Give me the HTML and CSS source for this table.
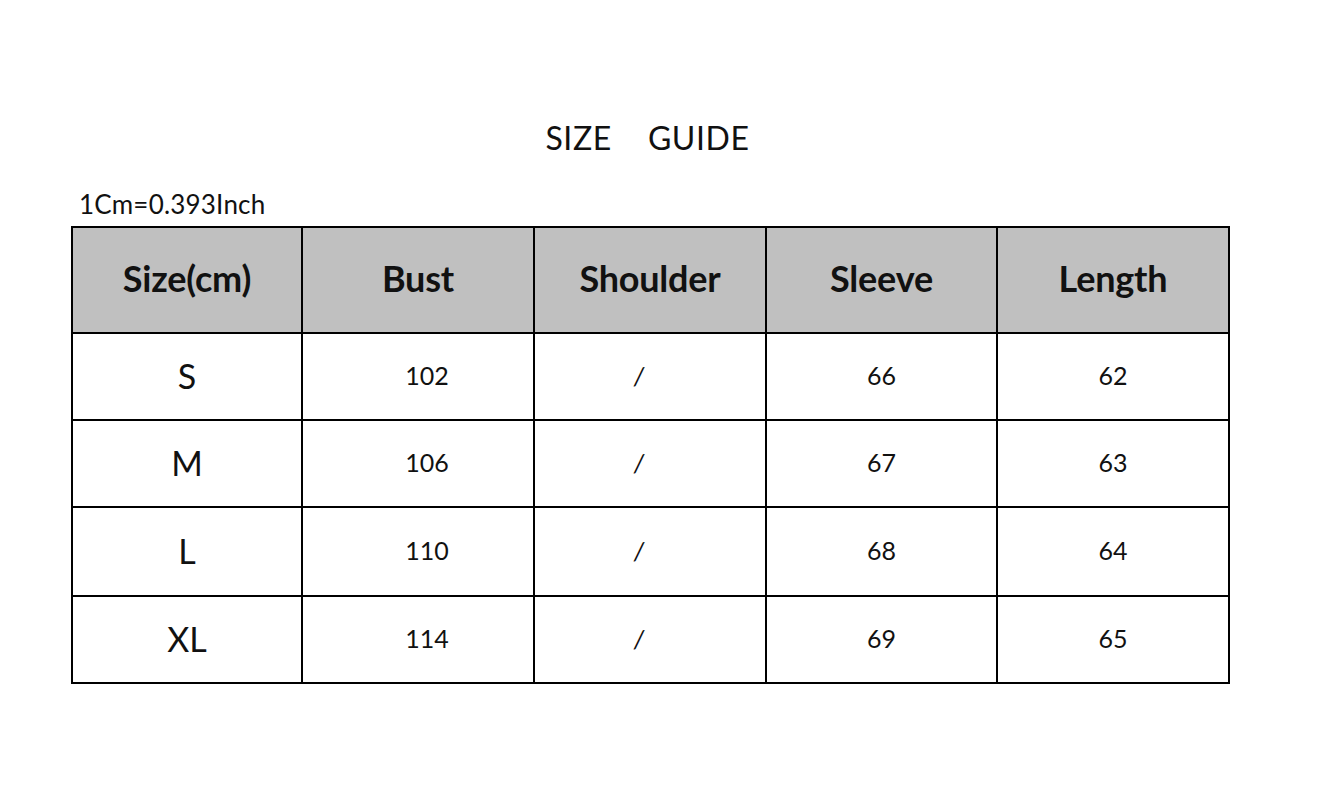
FILE: index.html
```html
<!DOCTYPE html>
<html>
<head>
<meta charset="utf-8">
<link rel="stylesheet" href="styles.css">
</head>
<body>
<div class="page">
  <h1 class="title">SIZE<span class="gap"></span>GUIDE</h1>
  <div class="note">1Cm=0.393Inch</div>
  <table class="chart">
    <colgroup>
      <col class="c1"><col class="c2"><col class="c3"><col class="c4"><col class="c5">
    </colgroup>
    <thead>
      <tr><th>Size(cm)</th><th>Bust</th><th>Shoulder</th><th>Sleeve</th><th>Length</th></tr>
    </thead>
    <tbody>
      <tr><td class="sz">S</td><td class="bust">102</td><td class="sh">/</td><td>66</td><td>62</td></tr>
      <tr><td class="sz">M</td><td class="bust">106</td><td class="sh">/</td><td>67</td><td>63</td></tr>
      <tr class="tall"><td class="sz">L</td><td class="bust">110</td><td class="sh">/</td><td>68</td><td>64</td></tr>
      <tr><td class="sz">XL</td><td class="bust">114</td><td class="sh">/</td><td>69</td><td>65</td></tr>
    </tbody>
  </table>
</div>
</body>
</html>
```

FILE: styles.css
```css
html, body {
  margin: 0;
  padding: 0;
  background: #fff;
}
body {
  font-family: Lato, "Open Sans", "Liberation Sans", sans-serif;
  color: #111;
}
.page {
  padding: 117px 0 0 71px;
  width: 1157px;
}
.title {
  margin: 0;
  font-weight: 400;
  font-size: 32px;
  line-height: 42px;
  text-align: center;
  padding-left: 0;
  padding-right: 4px;
  letter-spacing: 0.6px;
}
.title .gap {
  display: inline-block;
  width: 36px;
}
.note {
  margin-top: 30px;
  padding-left: 8px;
  font-size: 26px;
  line-height: 30px;
  height: 37px;
  letter-spacing: 0.2px;
}
.chart {
  border-collapse: collapse;
  table-layout: fixed;
  width: 1157px;
}
.c1 { width: 230px; }
.c2 { width: 232px; }
.c3 { width: 232px; }
.c4 { width: 231px; }
.c5 { width: 232px; }
.chart th, .chart td {
  border: 2px solid #000;
  text-align: center;
  vertical-align: middle;
  padding: 0;
}
.chart th {
  background: #c0c0c0;
  height: 100px;
  font-weight: 700;
  font-size: 36px;
  letter-spacing: -0.2px;
  padding-bottom: 4px;
}
.chart td {
  height: 82px;
  font-size: 25px;
  padding-bottom: 3px;
}
.chart tr.tall td {
  height: 84px;
}
.chart td.sz {
  font-size: 34px;
}
.chart td.bust {
  padding-left: 18px;
}
.chart td.sh {
  padding-right: 22px;
  font-style: italic;
}
```
